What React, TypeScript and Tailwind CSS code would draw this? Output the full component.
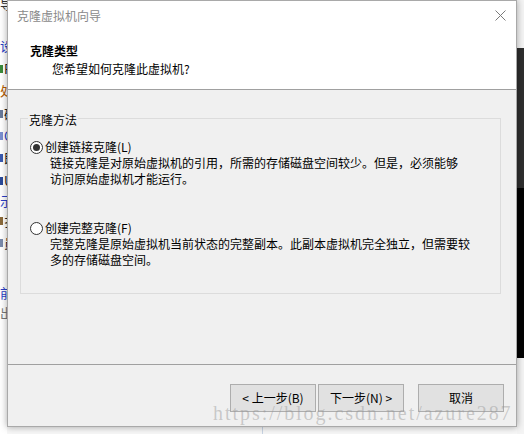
import React from 'react';

const leftFragments = [
  { ch: '导', color: 'text-[#333]', mt: 'mt-[-4px]' },
  { ch: '设', color: 'text-[#2a3fc7]', mt: 'mt-[26px]' },
  { ch: 'P', color: 'text-[#222]', mt: 'mt-[7px]', icon: 'bg-[#3a8a3a]' },
  { ch: '处', color: 'text-[#b35a00]', mt: 'mt-[6px]' },
  { ch: '码', color: 'text-[#222]', mt: 'mt-[7px]', icon: 'bg-[#6a7a9a]' },
  { ch: 'C', color: 'text-[#2a3fc7]', mt: 'mt-[6px]', icon: 'bg-[#7b8fd0]' },
  { ch: '即', color: 'text-[#222]', mt: 'mt-[6px]', icon: 'bg-[#3a5ab0]' },
  { ch: 'U', color: 'text-[#222]', mt: 'mt-[7px]', icon: 'bg-[#2a4a9a]' },
  { ch: '示', color: 'text-[#2a3fc7]', mt: 'mt-[4px]' },
  { ch: '扌', color: 'text-[#222]', mt: 'mt-[4px]', icon: 'bg-[#8a6a3a]' },
  { ch: '员', color: 'text-[#222]', mt: 'mt-[6px]', icon: 'bg-[#7a8aaa]' },
  { ch: '前', color: 'text-[#2a3fc7]', mt: 'mt-[34px]' },
  { ch: '出', color: 'text-[#777]', mt: 'mt-[4px]' },
];

function Radio({ checked }: { checked?: boolean }) {
  return (
    <span className="flex h-[13px] w-[13px] shrink-0 items-center justify-center rounded-full border border-[#333] bg-white">
      {checked && <span className="h-[7px] w-[7px] rounded-full bg-[#333]" />}
    </span>
  );
}

function Option({ checked, label, lines }: { checked?: boolean; label: string; lines: string[] }) {
  return (
    <div className="flex flex-col">
      <div className="flex h-4 items-center gap-[2px]">
        <Radio checked={checked} />
        <span className="leading-4">{label}</span>
      </div>
      <div className="pl-[20px]">
        {lines.map((l) => (
          <p key={l} className="leading-4">{l}</p>
        ))}
      </div>
    </div>
  );
}

function Button({ children, wide }: { children: React.ReactNode; wide?: boolean }) {
  return (
    <button className={`flex h-[28px] w-[86px] items-center justify-center border border-[#adadad] bg-[#e1e1e1] text-[12px] text-black ${wide ? 'ml-[12px]' : ''}`}>
      {children}
    </button>
  );
}

export default function App() {
  return (
    <div className="relative flex h-[434px] w-[524px] overflow-hidden bg-[#f7f7f7] font-['Noto_Sans_CJK_SC',sans-serif] text-[12px] text-black">
      {/* desktop behind, left */}
      <div className="flex h-full w-[7px] shrink-0 flex-col overflow-hidden bg-white text-[13px] leading-4">
        {leftFragments.map((f, i) => (
          <div key={i} className={`flex items-center whitespace-nowrap ${f.mt}`}>
            {f.icon && <span className={`mr-[1px] h-[8px] w-[3px] shrink-0 ${f.icon}`} />}
            <span className={f.color}>{f.ch}</span>
          </div>
        ))}
      </div>

      <div className="flex w-[510px] shrink-0 flex-col">
        {/* window */}
        <div className="z-10 flex h-[427px] flex-col border border-[#a9a9a9] bg-[#f0f0f0] shadow-[0_0_7px_rgba(0,0,0,0.35)]">
          <div className="flex h-[29px] items-center justify-between bg-white pl-[9px] pr-[9px]">
            <span className="leading-4 text-[#8a8a8a]">克隆虚拟机向导</span>
            <svg width="11" height="11" viewBox="0 0 11 11" className="mr-[1px]">
              <path d="M0.5 0.5 L10.5 10.5 M10.5 0.5 L0.5 10.5" stroke="#7a7a7a" strokeWidth="1" fill="none" />
            </svg>
          </div>
          <div className="h-[60px] border-b border-[#a0a0a0] bg-white pl-[22px] pt-[13px]">
            <p className="font-bold leading-4">克隆类型</p>
            <p className="mt-[2px] pl-[22px] leading-4">您希望如何克隆此虚拟机?</p>
          </div>
          <div className="h-[275px] border-b border-[#a0a0a0] px-[12px] pr-[15px] pt-[28px]">
            <div className="relative flex h-[176px] flex-col gap-[33px] border border-[#dcdcdc] pl-[9px] pt-[20px]">
              <span className="absolute left-[7px] top-[-7px] bg-[#f0f0f0] px-[1px] leading-4">克隆方法</span>
              <Option
                checked
                label="创建链接克隆(L)"
                lines={['链接克隆是对原始虚拟机的引用，所需的存储磁盘空间较少。但是，必须能够', '访问原始虚拟机才能运行。']}
              />
              <Option
                label="创建完整克隆(F)"
                lines={['完整克隆是原始虚拟机当前状态的完整副本。此副本虚拟机完全独立，但需要较', '多的存储磁盘空间。']}
              />
            </div>
          </div>
          <div className="flex flex-1 items-start justify-end gap-[2px] pr-[12px] pt-[19px]">
            <Button>&lt; 上一步(B)</Button>
            <Button>下一步(N) &gt;</Button>
            <Button wide>取消</Button>
          </div>
        </div>
        <div className="flex flex-1 pl-[255px]">
          <div className="w-px bg-[#c8d4e4]" />
        </div>
      </div>

      {/* desktop behind, right */}
      <div className="flex flex-1 flex-col">
        <div className="h-[48px] bg-[#f4f4f4]" />
        <div className="h-[140px] bg-[#2e2e2e]" />
        <div className="h-[170px] bg-[#030303]" />
        <div className="flex-1 bg-[#f4f4f4]" />
      </div>

      <span className="pointer-events-none absolute left-[213px] top-[403px] z-20 font-['Liberation_Serif',serif] text-[20px] leading-[20px] tracking-[1.95px] text-[rgba(150,150,150,0.45)]">
        https://blog.csdn.net/azure287
      </span>
    </div>
  );
}
